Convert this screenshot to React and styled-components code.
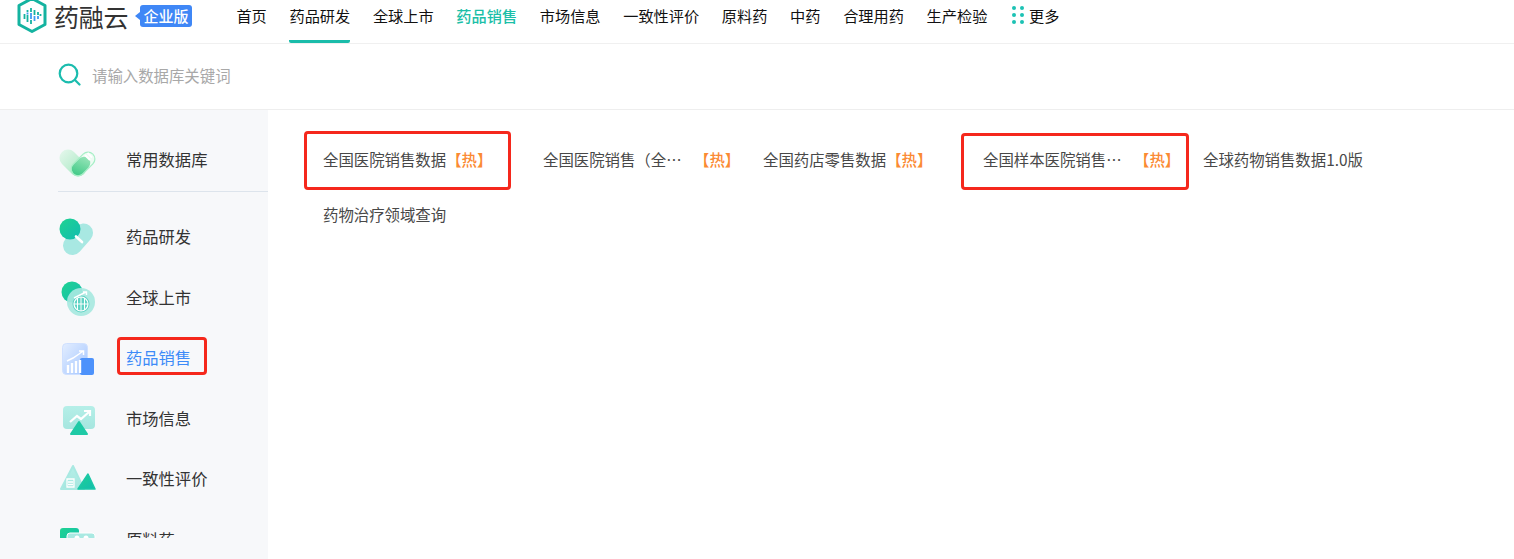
import React from 'react';
import styled, { createGlobalStyle } from 'styled-components';

const GlobalStyle = createGlobalStyle`
  html, body {
    margin: 0;
    height: 100%;
    overflow: hidden;
    background: #fff;
    font-family: "Noto Sans CJK SC", "Noto Sans", sans-serif;
  }
  * { box-sizing: border-box; }
`;

const Page = styled.div`
  display: flex;
  flex-direction: column;
  height: 100vh;
`;

const Header = styled.header`
  display: flex;
  align-items: flex-start;
  flex: none;
  height: 44px;
  padding-left: 17px;
  border-bottom: 1px solid #f0f0f0;
`;

const Brand = styled.div`
  display: flex;
  align-items: center;
  width: 219.4px;
  height: 33px;
`;

const Wordmark = styled.span`
  margin-left: 7px;
  font-size: 25px;
  line-height: 33px;
  letter-spacing: -0.3px;
  color: #333;
`;

const Badge = styled.span`
  position: relative;
  margin-left: 12px;
  width: 52px;
  height: 22px;
  margin-top: -1px;
  border-radius: 3px;
  background: #3f87f6;
  color: #fff;
  font-size: 15px;
  font-weight: 500;
  line-height: 22px;
  text-align: center;

  &::before {
    content: '';
    position: absolute;
    left: -5px;
    top: 7px;
    border-style: solid;
    border-width: 4px 5px 4px 0;
    border-color: transparent #3f87f6 transparent transparent;
  }
`;

const Nav = styled.nav`
  display: flex;
  gap: 22.7px;
`;

const NavItem = styled.a`
  display: flex;
  align-items: center;
  gap: 4px;
  height: 43px;
  padding-bottom: 11px;
  font-size: 15.2px;
  white-space: nowrap;
  color: ${p => (p.$active ? '#1cbfa8' : '#111')};
  font-weight: ${p => (p.$active ? 500 : 400)};
  border-bottom: 3px solid ${p => (p.$current ? '#1abcaa' : 'transparent')};
  border-radius: 0 0 2px 2px;
`;

const SearchRow = styled.div`
  display: flex;
  align-items: center;
  flex: none;
  gap: 11px;
  height: 66px;
  padding: 0 0 4px 58px;
  border-bottom: 1px solid #eee;
`;

const SearchInput = styled.input`
  width: 400px;
  border: 0;
  outline: 0;
  padding: 0;
  font-family: inherit;
  font-size: 15.4px;

  &::placeholder {
    color: #a8a8a8;
    opacity: 1;
  }
`;

const Body = styled.div`
  display: flex;
  flex: 1;
  min-height: 0;
`;

const Sidebar = styled.aside`
  flex: none;
  width: 268px;
  background: #f7f8fa;
`;

const SideList = styled.div`
  height: 428px;
  padding-top: 19px;
  padding-left: 58px;
  overflow: hidden;
`;

const PinnedRow = styled.div`
  height: 63px;
  margin-bottom: 14px;
  border-bottom: 1px solid #dde4ec;
`;

const SideRow = styled.div`
  position: relative;
  display: flex;
  align-items: center;
  height: ${p => (p.$pinned ? '60px' : '60.5px')};
`;

const SideIcon = styled.svg`
  flex: none;
  width: 40px;
  height: 40px;
  margin-top: 2px;
  overflow: visible;
`;

const SideLabel = styled.span`
  margin-left: 28px;
  font-size: 16.3px;
  color: ${p => (p.$active ? '#3d8bf8' : '#333')};
`;

const Content = styled.main`
  flex: 1;
  display: grid;
  grid-template-columns: repeat(5, 220px);
  grid-auto-rows: 55px;
  align-content: start;
  padding: 21px 0 0 35px;
`;

const DbItem = styled.div`
  position: relative;
  display: flex;
  align-items: center;
  padding-left: 20px;
  font-size: 15.4px;
  color: #484848;
  white-space: nowrap;
`;

const DbName = styled.span`
  max-width: ${p => (p.$clamped ? '151px' : 'none')};
  overflow: hidden;
  text-overflow: ellipsis;
`;

const Hot = styled.span`
  color: #fb8a33;
  font-weight: 500;
`;

const RedMark = styled.div`
  position: absolute;
  left: ${p => p.$left}px;
  top: ${p => p.$top}px;
  width: ${p => p.$width}px;
  height: ${p => p.$height}px;
  border: 3px solid #f5281c;
  border-radius: 4px;
  pointer-events: none;
`;

const NAV = [
  { label: '首页' },
  { label: '药品研发', current: true },
  { label: '全球上市' },
  { label: '药品销售', active: true },
  { label: '市场信息' },
  { label: '一致性评价' },
  { label: '原料药' },
  { label: '中药' },
  { label: '合理用药' },
  { label: '生产检验' },
];

const DATABASES = [
  { name: '全国医院销售数据', hot: true, mark: { $left: 1, $top: 0, $width: 207, $height: 59 } },
  { name: '全国医院销售（全国）', hot: true },
  { name: '全国药店零售数据', hot: true },
  { name: '全国样本医院销售数据', hot: true, mark: { $left: -2, $top: 2, $width: 228, $height: 57 } },
  { name: '全球药物销售数据1.0版' },
  { name: '药物治疗领域查询' },
];

const Logo = () => (
  <svg width="30" height="33" viewBox="0 0 30 33">
    <path d="M15 -1.5 28 5.5V24.5L15 31.5 2 24.5V5.5Z" fill="none" stroke="#14b3a0" strokeWidth="3" strokeLinejoin="round" />
    <path d="M7.5 14v5M10.5 10v2M10.5 15v7M14 8v4M14 20v4M17.5 10v5M21 12v3M23.5 14v2" stroke="#14b3a0" strokeWidth="1.8" />
    <path d="M10.5 12.5v2M14 13v6M17.5 16v5M21 16v3" stroke="#3f9cf0" strokeWidth="1.8" />
  </svg>
);

const SearchIcon = () => (
  <svg width="23" height="23" viewBox="0 0 23 23" fill="none">
    <circle cx="10.5" cy="10.5" r="8.8" stroke="#1bbcae" strokeWidth="2.2" />
    <path d="M17 17l4.5 4.5" stroke="#1bbcae" strokeWidth="2.2" strokeLinecap="round" />
  </svg>
);

const DotsIcon = () => (
  <svg width="14" height="20" viewBox="0 0 14 20" fill="#1cc2b4" style={{ marginLeft: 1 }}>
    {[3, 10, 17].map(y => (
      <React.Fragment key={y}>
        <circle cx="3" cy={y} r="2" />
        <circle cx="11" cy={y} r="2" />
      </React.Fragment>
    ))}
  </svg>
);

const Gradients = () => (
  <svg width="0" height="0" style={{ position: 'absolute' }}>
    <defs>
      <linearGradient id="mint" x1="0" y1="0" x2="1" y2="1">
        <stop offset="0" stopColor="#1fd391" />
        <stop offset="1" stopColor="#12bcb0" />
      </linearGradient>
      <linearGradient id="paleGreen" gradientUnits="userSpaceOnUse" x1="4" y1="12" x2="26" y2="34">
        <stop offset="0" stopColor="#e0f6e9" />
        <stop offset="1" stopColor="#a5e8c0" />
      </linearGradient>
      <linearGradient id="leaf" gradientUnits="userSpaceOnUse" x1="26" y1="18" x2="18" y2="36">
        <stop offset="0" stopColor="#8fe2b4" />
        <stop offset="1" stopColor="#3fc986" />
      </linearGradient>
      <linearGradient id="paleBlue" x1="0" y1="0" x2="1" y2="1">
        <stop offset="0" stopColor="#e3eeff" />
        <stop offset="1" stopColor="#a3c5ff" />
      </linearGradient>
      <linearGradient id="paleTeal" x1="0" y1="0" x2="0" y2="1">
        <stop offset="0" stopColor="#b5efe8" />
        <stop offset="1" stopColor="#a6e6df" />
      </linearGradient>
    </defs>
  </svg>
);

const PinnedIcon = () => (
  <SideIcon viewBox="0 0 40 40">
    <path d="M10 18 20 28" stroke="url(#paleGreen)" strokeWidth="17" strokeLinecap="round" />
    <path d="M20 29 30 19" stroke="#a6efc6" strokeWidth="15" strokeLinecap="round" />
    <path d="M20 29 30 19" stroke="#eefbf3" strokeWidth="12.5" strokeLinecap="round" />
    <path d="M20 29 26 23" stroke="url(#leaf)" strokeWidth="12.5" strokeLinecap="round" />
    <path d="M27 15 32 20M29.5 13 34 17.5" stroke="#fff" strokeWidth="2" />
  </SideIcon>
);

const ResearchIcon = () => (
  <SideIcon viewBox="0 0 40 40">
    <path d="M14.5 28.5 25.5 16" stroke="#a8e8e2" strokeWidth="19" strokeLinecap="round" />
    <circle cx="12" cy="12" r="10.5" fill="url(#mint)" />
    <path d="M18 19.5 24 25" stroke="#fff" strokeWidth="2.6" strokeLinecap="round" />
  </SideIcon>
);

const GlobalIcon = () => (
  <SideIcon viewBox="0 0 40 40">
    <circle cx="14" cy="14" r="10.5" fill="url(#mint)" />
    <circle cx="23" cy="24" r="14" fill="#a7e8e0" fillOpacity="0.92" />
    <circle cx="23" cy="26" r="8.5" fill="#5fd3c4" />
    <circle cx="23" cy="26" r="7" fill="none" stroke="#fff" strokeWidth="1.2" />
    <path d="M16 26h14M23 19v14M19.5 20v12M26.5 20v12" stroke="#fff" strokeWidth="1" />
    <path d="M16 20l6-3 6-3M25 14h3.5v3" fill="none" stroke="#fff" strokeWidth="1.4" />
  </SideIcon>
);

const SalesIcon = () => (
  <SideIcon viewBox="0 0 40 40">
    <rect x="4.5" y="5.5" width="25" height="31" rx="4" fill="url(#paleBlue)" stroke="#cfe0ff" />
    <rect x="22" y="20" width="14" height="17" rx="2" fill="#4d92fb" />
    <path d="M10 35v-8M14 35v-10M18 35v-12M22 35V22" stroke="#fff" strokeWidth="2.4" />
    <path d="M9 23l6-3 6-4 4-3M21 13h4.5v4" fill="none" stroke="#fff" strokeWidth="1.5" />
  </SideIcon>
);

const MarketIcon = () => (
  <SideIcon viewBox="0 0 40 40">
    <rect x="5" y="7" width="32" height="23" rx="4" fill="url(#paleTeal)" />
    <path d="M12 23l7-6 4 3 8-7M26 12h6v5" fill="none" stroke="#fff" strokeWidth="2.2" />
    <path d="M21 23 29 35H13Z" fill="#1fcaa6" stroke="#1fcaa6" strokeWidth="2" strokeLinejoin="round" />
  </SideIcon>
);

const ConsistencyIcon = () => (
  <SideIcon viewBox="0 0 40 40">
    <path d="M15 7 26 30H3Z" fill="url(#paleTeal)" stroke="#a9e9e2" strokeWidth="2" strokeLinejoin="round" />
    <path d="M30 15 37 30H20Z" fill="url(#mint)" stroke="#1cc7a8" strokeWidth="1.5" strokeLinejoin="round" />
    <path d="M9 20h7v8H9ZM10 23h5M10 25.5h5" fill="none" stroke="#fff" strokeWidth="1.3" />
  </SideIcon>
);

const MaterialIcon = () => (
  <SideIcon viewBox="0 0 40 40">
    <rect x="2" y="8" width="19" height="18" rx="3" fill="url(#mint)" />
    <rect x="9" y="13" width="28" height="16" rx="3" fill="#a9e9e2" stroke="#fff" />
    <circle cx="19" cy="18" r="2.5" fill="#fff" />
    <circle cx="28" cy="18" r="2.5" fill="#fff" />
  </SideIcon>
);

const SideEntry = ({ icon: Icon, label, active, pinned, children }) => (
  <SideRow $pinned={pinned}>
    <Icon />
    <SideLabel $active={active}>{label}</SideLabel>
    {children}
  </SideRow>
);

export default function App() {
  return (
    <Page>
      <GlobalStyle />
      <Gradients />
      <Header>
        <Brand>
          <Logo />
          <Wordmark>药融云</Wordmark>
          <Badge>企业版</Badge>
        </Brand>
        <Nav>
          {NAV.map(n => (
            <NavItem key={n.label} $active={n.active} $current={n.current}>{n.label}</NavItem>
          ))}
          <NavItem>
            <DotsIcon />
            更多
          </NavItem>
        </Nav>
      </Header>
      <SearchRow>
        <SearchIcon />
        <SearchInput placeholder="请输入数据库关键词" />
      </SearchRow>
      <Body>
        <Sidebar>
          <SideList>
            <PinnedRow>
              <SideEntry icon={PinnedIcon} label="常用数据库" pinned />
            </PinnedRow>
            <SideEntry icon={ResearchIcon} label="药品研发" />
            <SideEntry icon={GlobalIcon} label="全球上市" />
            <SideEntry icon={SalesIcon} label="药品销售" active>
              <RedMark $left={59} $top={10} $width={90} $height={38} />
            </SideEntry>
            <SideEntry icon={MarketIcon} label="市场信息" />
            <SideEntry icon={ConsistencyIcon} label="一致性评价" />
            <SideEntry icon={MaterialIcon} label="原料药" />
          </SideList>
        </Sidebar>
        <Content>
          {DATABASES.map(db => (
            <DbItem key={db.name}>
              <DbName $clamped={db.hot}>{db.name}</DbName>
              {db.hot && <Hot>【热】</Hot>}
              {db.mark && <RedMark {...db.mark} />}
            </DbItem>
          ))}
        </Content>
      </Body>
    </Page>
  );
}
